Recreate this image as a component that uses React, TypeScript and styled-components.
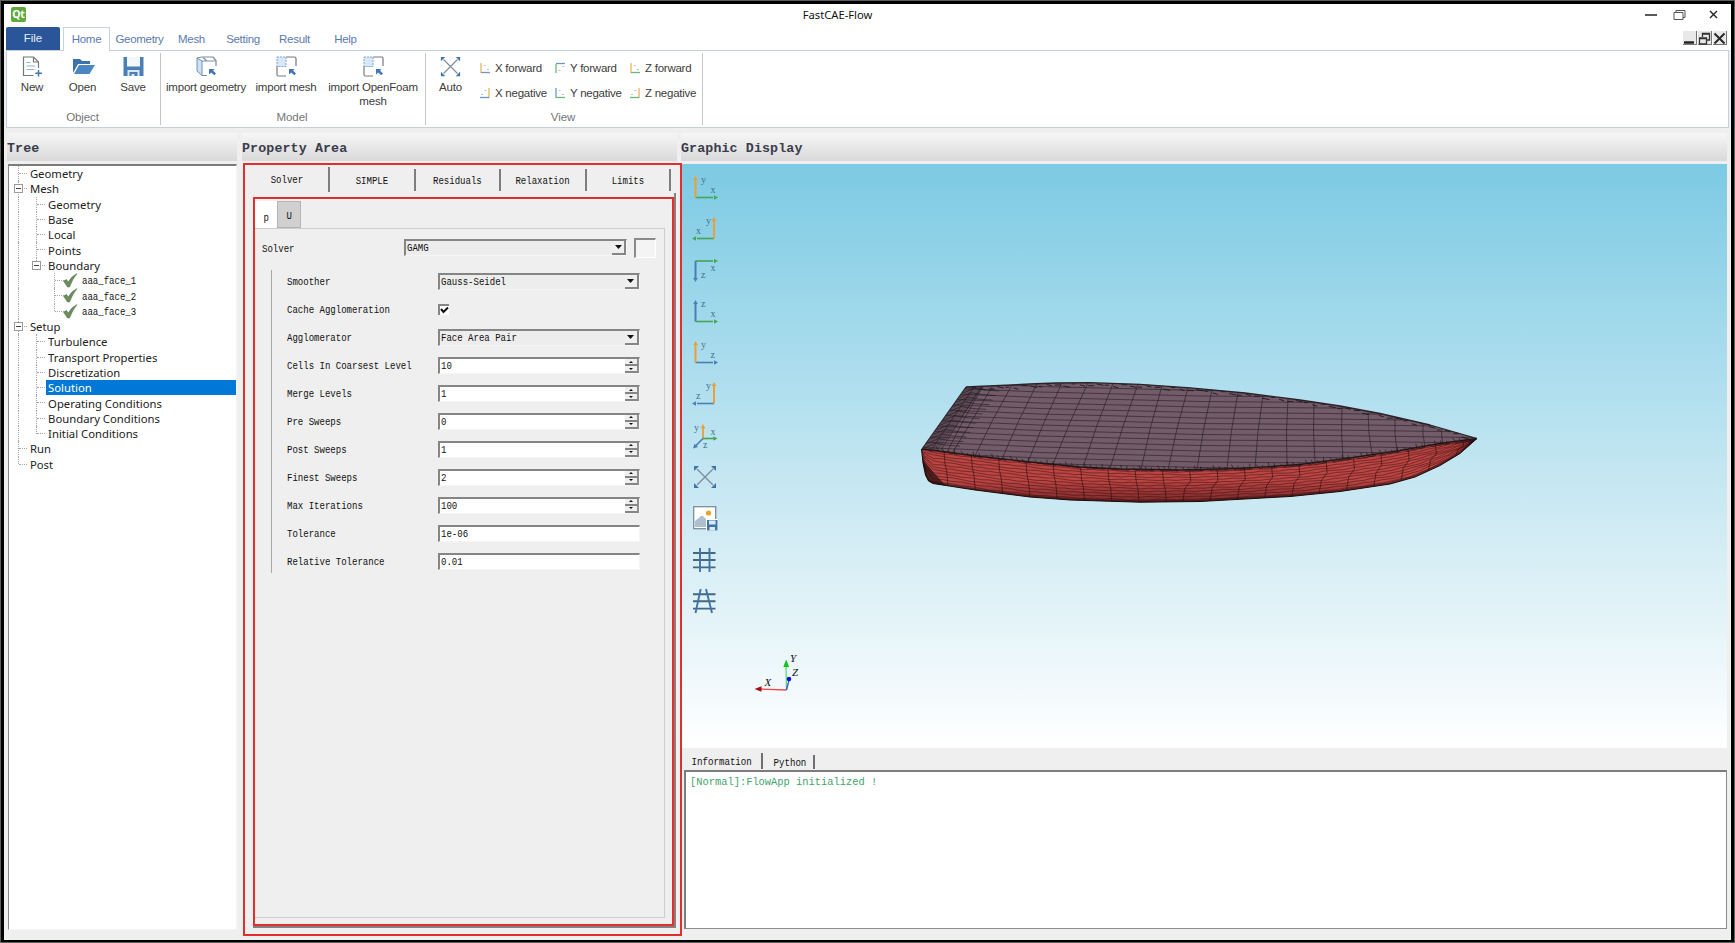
import React from "react";
import styled, { createGlobalStyle } from "styled-components";

const Global = createGlobalStyle`
  * { box-sizing: border-box; }
  body { margin: 0; background: #fff; }
`;

const SANS = `"Liberation Sans", Arial, sans-serif`;
const UI = `"Noto Sans", "Open Sans", sans-serif`;
const MONO = `"Liberation Mono", "Noto Sans CJK SC", monospace`;

/* ---------- window chrome ---------- */
const Frame = styled.div`
  width: 1735px;
  height: 943px;
  border: 4px solid #000;
  border-bottom-width: 3px;
  outline: 1px solid #5c605b;
  outline-offset: -1px;
  background: #efefef;
  display: flex;
  flex-direction: column;
  overflow: hidden;
  font-family: ${SANS};
  color: #222;
`;
const TitleBar = styled.div`
  height: 23px;
  flex: none;
  background: #fff;
  display: grid;
  grid-template-columns: 120px 1fr 120px;
  align-items: center;
  padding: 0 13px 2px 7px;
`;
const QtBadge = styled.div`
  width: 15px;
  height: 15px;
  border-radius: 2px;
  background: #5faa3c;
  color: #fff;
  font: bold 10.5px/14px ${UI};
  text-align: center;
  letter-spacing: -0.3px;
`;
const WindowTitle = styled.div`
  text-align: center;
  font: 11.2px/20px ${UI};
  color: #111;
  padding-right: 54px;
`;
const WindowButtons = styled.div`
  display: flex;
  justify-content: flex-end;
  align-items: center;
  gap: 16px;
`;
const MenuRow = styled.div`
  height: 23px;
  flex: none;
  background: #fff;
  display: flex;
  padding-left: 2px;
`;
const FileTab = styled.div`
  width: 54px;
  margin-right: 3px;
  background: #2a5699;
  border-radius: 2px 2px 0 0;
  color: #e6edf8;
  font-size: 11.5px;
  line-height: 23px;
  text-align: center;
`;
const MenuTab = styled.div<{ $w: number; $active?: boolean }>`
  width: ${(p) => p.$w}px;
  height: ${(p) => (p.$active ? 24 : 23)}px;
  position: relative;
  z-index: 1;
  border: 1px solid ${(p) => (p.$active ? "#c6d3e2" : "transparent")};
  border-bottom: none;
  background: ${(p) => (p.$active ? "#fff" : "transparent")};
  color: #5b7ab0;
  font-size: 11.5px;
  letter-spacing: -0.3px;
  line-height: 22px;
  text-align: center;
  white-space: nowrap;
`;
const MdiButtons = styled.div`
  display: flex;
  margin-left: auto;
  padding: 4px 4px 0 0;
  gap: 1px;
`;
const MdiButton = styled.div`
  width: 14px;
  height: 14px;
  background: #e9e9e9;
  border-right: 1px solid #777;
  border-bottom: 1px solid #777;
`;

/* ---------- ribbon ---------- */
const Ribbon = styled.div`
  height: 78px;
  flex: none;
  margin: 0 2px;
  background: #fff;
  border: 1px solid #c6d0db;
  display: flex;
`;
const RibbonGroup = styled.div<{ $w: number }>`
  width: ${(p) => p.$w}px;
  display: flex;
  flex-direction: column;
  position: relative;
  &::after {
    content: "";
    position: absolute;
    right: 0;
    top: 2px;
    height: 72px;
    border-right: 1px solid #c3c6ca;
  }
`;
const RibbonItems = styled.div`
  display: flex;
  height: 60px;
`;
const RibbonButton = styled.div<{ $w: number; $pad?: number }>`
  width: ${(p) => p.$w}px;
  margin-left: ${(p) => p.$pad ?? 0}px;
  display: flex;
  flex-direction: column;
  align-items: center;
  padding-top: 5px;
  font-size: 11.5px;
  letter-spacing: -0.2px;
  line-height: 13.5px;
  color: #3c3c3c;
  text-align: center;
  white-space: pre;
  svg { margin-bottom: 4px; flex: none; }
`;
const GroupLabel = styled.div`
  text-align: center;
  padding-right: 3px;
  font-size: 11.5px;
  letter-spacing: -0.1px;
  line-height: 13px;
  color: #757575;
`;
const ViewGrid = styled.div`
  display: grid;
  grid-template-columns: 75px 75px 74px;
  grid-template-rows: 24px 25px;
  padding: 5px 0 0 4px;
`;
const ViewButton = styled.div`
  display: flex;
  align-items: center;
  gap: 4px;
  font-size: 11.5px;
  letter-spacing: -0.25px;
  color: #3c3c3c;
  white-space: nowrap;
`;

/* ---------- panels ---------- */
const Body = styled.div`
  flex: 1;
  display: grid;
  grid-template-columns: 230px 444px 1046px;
  padding: 5px 0 0 3px;
`;
const Column = styled.div<{ $gap?: number }>`
  display: flex;
  flex-direction: column;
  min-width: 0;
  margin-left: ${(p) => p.$gap ?? 0}px;
`;
const PanelHeader = styled.div<{ $w: number }>`
  width: ${(p) => p.$w}px;
  height: 28px;
  flex: none;
  background: linear-gradient(#f6f6f6, #d9d9d9);
  font: bold 13.3px/31px ${MONO};
  letter-spacing: 0.12px;
  color: #3a3d4c;
  white-space: pre;
`;

const Song = styled.span<{ $size?: number; $sx?: number; $color?: string; $mid?: boolean }>`
  display: inline-block;
  font-family: ${MONO};
  font-size: ${(p) => p.$size ?? 10.5}px;
  color: ${(p) => p.$color ?? "#111"};
  transform: scaleX(${(p) => p.$sx ?? 0.86});
  transform-origin: ${(p) => (p.$mid ? "center" : "left")};
  white-space: pre;
`;

/* ---------- tree ---------- */
const TreeBox = styled.div`
  margin: 3px 0 0 1px;
  width: 229px;
  height: 766px;
  background: #fff;
  border: 1px solid #8a8a8a;
  border-top: 2px solid #7c7c7c;
  border-right: 1px solid #f4f4f4;
  border-bottom-color: #f4f4f4;
  padding-left: 1px;
`;
const TreeRow = styled.div`
  height: 15.3px;
  display: flex;
  font: 11.3px/15px ${UI};
  color: #222;
  white-space: nowrap;
`;
const Guide = styled.div<{ $v: "full" | "half" | "none"; $h?: boolean }>`
  width: 18.2px;
  position: relative;
  flex: none;
  &::before {
    content: "";
    position: absolute;
    left: 8px;
    top: 0;
    height: ${(p) => (p.$v === "full" ? "100%" : "50%")};
    border-left: ${(p) => (p.$v === "none" ? "none" : "1px dotted #a6a6a6")};
  }
  &::after {
    content: "";
    position: absolute;
    left: 9px;
    right: 1px;
    top: 7px;
    border-top: ${(p) => (p.$h ? "1px dotted #a6a6a6" : "none")};
  }
`;
const Toggle = styled.div`
  position: absolute;
  z-index: 1;
  left: 4px;
  top: 3px;
  width: 9px;
  height: 9px;
  border: 1px solid #9a9a9a;
  background: #fff;
  &::after {
    content: "";
    position: absolute;
    left: 1px;
    right: 1px;
    top: 3px;
    border-top: 1px solid #444;
  }
`;
const TreeText = styled.div<{ $sel?: boolean; $face?: boolean }>`
  padding-left: ${(p) => (p.$face ? 4 : 2.5)}px;
  padding-top: ${(p) => (p.$face ? 2 : 0)}px;
  margin-left: ${(p) => (p.$face ? 0 : -0.8)}px;
  position: relative;
  flex: 1;
  display: flex;
  align-items: center;
  ${(p) => (p.$sel ? "background:#0078d7;color:#fff;" : "")}
`;

/* ---------- property area ---------- */
const RedOuter = styled.div`
  position: relative;
  z-index: 2;
  margin: 2px -1px 0 1px;
  height: 773px;
  border: 2px solid #e02f2d;
  background: #efefef;
  display: flex;
  flex-direction: column;
`;
const TabStrip = styled.div`
  height: 28px;
  flex: none;
  display: flex;
  padding: 4px 0 0 0;
`;
const PropTab = styled.div<{ $w: number; $first?: boolean }>`
  width: ${(p) => p.$w}px;
  height: ${(p) => (p.$first ? 25 : 22)}px;
  margin-top: ${(p) => (p.$first ? -2 : 0)}px;
  border-right: 2px solid #7e7e7e;
  text-align: center;
  line-height: ${(p) => (p.$first ? 22 : 19)}px;
`;
const PageEdge = styled.div`
  margin: 0 4px 0 8px;
  height: 735px;
  padding-top: 4px;
  border-right: 2px solid #8a8080;
  border-bottom: 2px solid #8a8080;
`;
const RedInner = styled.div`
  height: 729px;
  border: 2px solid #e02f2d;
  display: flex;
  flex-direction: column;
  padding-top: 2px;
`;
const FieldTabs = styled.div`
  display: flex;
  height: 27px;
  flex: none;
`;
const FieldTab = styled.div<{ $on?: boolean }>`
  width: ${(p) => (p.$on ? 22 : 24)}px;
  background: ${(p) => (p.$on ? "#fff" : "#d0d0d0")};
  border: ${(p) => (p.$on ? "1px solid #fff" : "1px solid #b4b4b4")};
  text-align: center;
  line-height: ${(p) => (p.$on ? 27 : 24)}px;
`;
const GroupBox = styled.div`
  height: 690px;
  margin-right: 7px;
  border: 1px solid #cdcdcd;
  border-left: none;
  padding: 8px 0 0 7px;
`;
const SolverRow = styled.div`
  display: flex;
  align-items: center;
  height: 21px;
`;
const SolverLabel = styled.div`
  width: 142px;
  flex: none;
  line-height: 16px;
`;
const Swatch = styled.div`
  width: 22px;
  height: 20px;
  flex: none;
  margin-left: 7px;
  border: 1px solid #fff;
  border-top: 2px solid #8a8a8a;
  border-left: 2px solid #8a8a8a;
  background: #f4f4f4;
`;
const Details = styled.div`
  margin: 12px 0 0 9px;
  width: 369px;
  height: 303px;
  border-left: 1px solid #a8a8a8;
  display: flex;
  flex-direction: column;
`;
const FormRow = styled.div<{ $h: number }>`
  height: ${(p) => p.$h}px;
  display: flex;
  align-items: center;
  padding-left: 14.5px;
`;
const FormLabel = styled.div`
  width: 151px;
  line-height: 16px;
  padding-bottom: 1px;
`;
const Field = styled.div<{ $w: number; $white?: boolean }>`
  width: ${(p) => p.$w}px;
  flex: none;
  height: 17px;
  border: 1px solid #f6f6f6;
  border-top: 2px solid #858585;
  border-left: 2px solid #858585;
  background: ${(p) => (p.$white ? "#fff" : "#ededed")};
  display: flex;
  justify-content: space-between;
  line-height: 14px;
  padding-left: 1px;
`;
const DropButton = styled.div`
  width: 14px;
  height: 14px;
  border-right: 2px solid #858585;
  border-bottom: 2px solid #858585;
  background: #efefef;
  display: flex;
  align-items: center;
  justify-content: center;
`;
const Spin = styled.div`
  width: 14px;
  display: flex;
  flex-direction: column;
`;
const SpinHalf = styled.div`
  height: 7px;
  border-right: 2px solid #909090;
  border-bottom: 2px solid #858585;
  background: #efefef;
  display: flex;
  align-items: center;
  justify-content: center;
`;
const CheckBox = styled.div`
  width: 11px;
  height: 11px;
  background: #fff;
  border-top: 2px solid #858585;
  border-left: 2px solid #858585;
  display: flex;
`;

/* ---------- graphics ---------- */
const Scene = styled.div`
  margin-top: 3px;
  height: 584px;
  flex: none;
  background: linear-gradient(#7ccae3 0%, #a9dced 33%, #d0ebf4 62%, #ffffff 100%);
  position: relative;
`;
const SceneDrawing = styled.svg`
  position: absolute;
  left: 0;
  top: 0;
`;
const ToolColumn = styled.div`
  position: relative;
  width: 24px;
  margin-left: 12px;
  padding-top: 11.5px;
  display: flex;
  flex-direction: column;
  gap: 17.35px;
  svg { display: block; flex: none; overflow: visible; }
`;
const InfoTabs = styled.div`
  height: 22px;
  flex: none;
  display: flex;
  padding: 5px 0 0 2px;
`;
const InfoTab = styled.div<{ $w: number; $on?: boolean }>`
  width: ${(p) => p.$w}px;
  height: ${(p) => (p.$on ? 16 : 14)}px;
  margin-top: ${(p) => (p.$on ? 0 : 2)}px;
  padding-left: ${(p) => (p.$on ? 0 : 4)}px;
  border-right: 2px solid #707070;
  text-align: center;
  line-height: ${(p) => (p.$on ? 14 : 11)}px;
`;
const Console = styled.div`
  margin-left: 3px;
  width: 1043px;
  height: 159px;
  background: #fff;
  border: 1px solid #8c8c8c;
  border-top: 2px solid #7c7c7c;
  border-left: 2px solid #7c7c7c;
  padding: 1px 0 0 4px;
  line-height: 13px;
`;

/* ---------- icons ---------- */
const ORANGE = "#eb9f35";
const GREEN = "#45a655";
const BLUE = "#4a7fb5";

type AxesProps = {
  hc: string; vc: string; hl: string; vl: string;
  flipX?: boolean; flipY?: boolean;
};
const AxesIcon = ({ hc, vc, hl, vl, flipX, flipY }: AxesProps) => {
  const ox = flipX ? 21 : 2.5;
  const oy = flipY ? 3 : 21.5;
  const ex = flipX ? 0 : 24;
  const ey = flipY ? 24 : 0;
  const dx = flipX ? 4 : -4;
  const dy = flipY ? -4 : 4;
  return (
    <svg width="24" height="24" viewBox="0 0 24 24" fontFamily="Liberation Serif, serif" fontSize="10" fill="#46708c">
      <path d={`M${ox} ${oy}H${ex + dx}`} stroke={hc} strokeWidth="1.6" />
      <path d={`M${ox} ${oy}V${ey + dy}`} stroke={vc} strokeWidth="2" />
      <path d={`M${ex - dx / 4} ${oy}l${dx} -2.3v4.6z`} fill={hc} />
      <path d={`M${ox} ${ey}l-2.3 ${dy}h4.6z`} fill={vc} />
      <text x={flipX ? 3 : 17.5} y={flipY ? 12.500 : 17}>{hl}</text>
      <text x={flipX ? 13 : 8} y={flipY ? 20 : 7}>{vl}</text>
    </svg>
  );
};

const SmallAxes = ({ c1, c2, mode }: { c1: string; c2: string; mode: "bl" | "br" | "tl" }) => {
  const d = { bl: ["M2 1V11", "M2 10.5H11"], br: ["M10 1V11", "M10 10.5H1"], tl: ["M2 2V11", "M2 1.5H11"] }[mode];
  return (
    <svg width="12" height="12" viewBox="0 0 12 12" fill="none" strokeWidth="1.3" opacity="0.8">
      <path d={d[0]} stroke={c1} />
      <path d={d[1]} stroke={c2} />
      <path d={mode === "br" ? "M2 7.5h2M5.5 3.5h2" : mode === "tl" ? "M8.5 4.5h2M4.5 8.5h2" : "M5 3.5h1.5M8 7.5h2"} stroke="#9bb0c4" strokeWidth="1" />
    </svg>
  );
};

const NewIcon = () => (
  <svg width="20" height="21" viewBox="-0.5 0 20 21" fill="none" overflow="visible">
    <path d="M11 19.5H1V1H11L16 6V12" stroke="#777" strokeWidth="1.2" />
    <path d="M11 1V6H16" stroke="#777" strokeWidth="1.2" />
    <path d="M4 6.5H8M4 10H13M4 13.5H12" stroke="#8fb4dc" strokeWidth="1.2" />
    <path d="M16 14V20.5M12.8 17.2H19.4" stroke="#3f78b8" strokeWidth="1.5" />
  </svg>
);
const OpenIcon = () => (
  <svg width="23" height="21" viewBox="0 0 23 21" overflow="visible">
    <path d="M2 17V3H9L11 5H19V8H7L2 17Z" fill="#3f72a8" />
    <path d="M3 18L8 9H24L18.500 18Z" fill="#4b85c2" />
  </svg>
);
const SaveIcon = () => (
  <svg width="20" height="21" viewBox="-0.5 0 20 21" overflow="visible">
    <path d="M0 1H20V20H0Z" fill="#4a7fb8" />
    <path d="M3.5 1H16.5V10.500H3.5Z" fill="#f4f7fb" />
    <path d="M4 14H16V20H4Z" fill="#dce6f1" />
    <path d="M6 16H14V20H11V18H8V20H6Z" fill="#4a7fb8" />
  </svg>
);
const ImportGeometryIcon = () => (
  <svg width="21" height="21" viewBox="0 0 21 21" fill="none">
    <path d="M1 2L6 1H17L20 4.500V10M6 19.5H11" stroke="#7a8a9a" strokeWidth="1.2" />
    <path d="M1 2L6 5V19.5L1 15Z" fill="#cfe0f2" stroke="#6f93bb" />
    <path d="M6 5H19.500M7 1.500L11 5" stroke="#7a93ac" strokeWidth="1.1" />
    <path d="M13 13H18.5L17 14.6L20 17.6L18.2 19.2L15.2 16.4L13 18.5Z" fill="#3f78b8" />
  </svg>
);
const ImportMeshIcon = () => (
  <svg width="21" height="21" viewBox="0 0 21 21" fill="none">
    <path d="M10 1H18.5Q20 1 20 2.5V10M10 20H2.5Q1 20 1 18.5V10" stroke="#7a7a7a" strokeWidth="1.2" />
    <path d="M1 1H10V10.5H1Z" fill="#d9e8f7" stroke="#7fa6d0" strokeDasharray="2 1" />
    <path d="M13 13H18.5L17 14.6L20 17.6L18.2 19.2L15.2 16.4L13 18.5Z" fill="#3f78b8" />
  </svg>
);
const FitIcon = ({ s = 20 }: { s?: number }) => (
  <svg width={s} height={s} viewBox="0 0 24 24">
    <path d="M4 4L20 20M20 4L4 20" stroke="#7d8b98" strokeWidth="1.3" />
    <path d="M1 1H6L1 6ZM23 1H18L23 6ZM1 23H6L1 18ZM23 23H18L23 18Z" fill="#3f74ab" />
  </svg>
);
const IsoIcon = () => (
  <svg width="24" height="24" viewBox="0 0 24 24" fontFamily="Liberation Serif, serif" fontSize="10" fill="#46708c">
    <path d="M10 14.5V3" stroke={ORANGE} strokeWidth="1.8" />
    <path d="M10 14.5H21" stroke={GREEN} strokeWidth="1.6" />
    <path d="M10 14.5L2.5 22" stroke={BLUE} strokeWidth="1.7" />
    <path d="M10 0L7.7 4.2H12.3Z" fill={ORANGE} />
    <path d="M24.5 14.5L20.5 12.2V16.8Z" fill={GREEN} />
    <path d="M0 24.5L1.5 19.7L5 23Z" fill={BLUE} />
    <text x="1" y="6.500">y</text>
    <text x="17.5" y="11">x</text>
    <text x="10" y="24">z</text>
  </svg>
);
const SnapshotIcon = () => (
  <svg width="24" height="24" viewBox="0 0 24 24">
    <rect x="0.7" y="0.7" width="22" height="22" fill="#fff" stroke="#7e8d99" strokeWidth="1.3" />
    <path d="M2 21V15L8 10H10L15 15V21Z" fill="#adc0cf" />
    <circle cx="15.5" cy="7" r="2.6" fill="#e9a32d" />
    <path d="M13 13H25V25H13Z" fill="#fff" />
    <path d="M14 14H24.500V24.500H14Z" fill="#3f74ab" />
    <path d="M16 14.6H22.500V18.500H16ZM16.500 21H22V24.500H16.500Z" fill="#dceaf5" />
  </svg>
);
const GridIcon = ({ persp }: { persp?: boolean }) => (
  <svg width="24" height="24" viewBox="0 0 24 24" fill="none">
    <path d={persp ? "M0 5.3H22.5M0 12.3H22.5M0 19.6H22.5" : "M0 5H22.5M0 12H22.5M0 19.4H22.5"} stroke="#46677f" strokeWidth="1.9" />
    <path d={persp ? "M7.7 0L2.5 24M13 0L19 24" : "M7 0V24M16.5 0V24"} stroke="#3f74ab" strokeWidth="1.9" />
  </svg>
);
const CheckSvg = styled.svg`
  flex: none;
  margin-left: -1.5px;
`;
const CheckIcon = () => (
  <CheckSvg width="15" height="15" viewBox="0 0 15 15">
    <path d="M0.5 8L3.500 6.500L5.300 9Q8 3.500 14 0.5Q9.500 6 6.500 14H4.500Z" fill="#6b8d60" stroke="#4c6b45" strokeWidth="0.5" />
  </CheckSvg>
);

/* ---------- hull mesh ---------- */
type Pt = [number, number];
const at = (pts: Pt[], x: number): number => {
  for (let i = 1; i < pts.length; i++) {
    if (x <= pts[i][0]) {
      const [x0, y0] = pts[i - 1];
      const [x1, y1] = pts[i];
      return y0 + ((y1 - y0) * (x - x0)) / (x1 - x0);
    }
  }
  return pts[pts.length - 1][1];
};
const path = (pts: Pt[]) => pts.map(([x, y], i) => `${i ? "L" : "M"}${x.toFixed(1)} ${y.toFixed(1)}`).join("");

const deckTop: Pt[] = [[966, 387], [1000, 385.5], [1030, 384], [1056, 383], [1090, 382.7], [1140, 384.3], [1190, 387.8], [1245, 393], [1300, 400], [1340, 406], [1380, 413.5], [1430, 425], [1477, 438.5]];
const deckLow: Pt[] = [[922, 449], [950, 452.5], [980, 456.5], [1030, 462], [1080, 467], [1120, 469], [1180, 470], [1240, 468.5], [1300, 464.5], [1350, 458], [1400, 450.5], [1440, 443.5], [1477, 438.5]];
const keel: Pt[] = [[921.5, 449], [923, 463], [925.5, 475], [928.5, 481], [933, 483.5], [975, 490], [1030, 497], [1070, 500], [1140, 502.2], [1200, 501.5], [1290, 496.5], [1340, 491.500], [1390, 484], [1415, 477], [1440, 465.5], [1460, 453.5], [1477, 438.5]];

const ribs: Pt[] = [[983, 947], [1012, 975], [1037, 1002], [1062, 1028], [1088, 1053], [1113, 1083], [1138, 1110], [1162, 1141], [1188, 1168], [1212, 1197], [1238, 1227], [1263, 1255], [1288, 1287], [1314, 1315], [1342, 1343], [1368, 1372], [1395, 1397], [1423, 1425], [1442, 1443]];
const deckRibs = ribs.map(([a, b]) => path([[a, at(deckTop, a)], [(a + b) / 2 - 1, (at(deckTop, a) + at(deckLow, b)) / 2], [b, at(deckLow, b)]])).join("");

const strakes = Array.from({ length: 17 }, (_, i) => {
  const y = 381 + i * 5.5;
  return path([[922, y - 5], [1040, y], [1200, y + 4], [1330, y + 5], [1477, y + 7]]);
}).join("");
const rows: Pt[][] = Array.from({ length: 11 }, (_, i) => {
  const t = (i + 0.7) / 11.5;
  return Array.from({ length: 60 }, (_, j): Pt => {
    const x = 924 + j * 9.35;
    const a = at(deckLow, x);
    const b = at(keel, x);
    return [x, a + (b - a) * t + ((j * 7 + i * 3) % 5) * 0.25 - 0.5];
  });
});
const hullRows = rows.map(path).join("");
const hullRibs = Array.from({ length: 20 }, (_, i) => {
  const x = 944 + i * 27.3;
  const bend = i < 9 ? 4 : -7;
  const a = at(deckLow, x);
  const b = at(keel, x + bend);
  return path([[x, a], [x + 1, a + (b - a) * 0.35], [x + bend * 0.7, a + (b - a) * 0.6], [x + bend, b]]);
}).join("");
const transom = Array.from({ length: 13 }, (_, i) => {
  const y = 391 + i * 4.6;
  const x = 966 - (y - 387) * 0.71;
  return path([[x, y + 2], [x + 11, y - 3], [x + 22, y - 1], [x + 36, y]]);
}).join("");
const edgeCells = Array.from({ length: 88 }, (_, i) => {
  const x = 930 + i * 6.15;
  const y = at(deckLow, x);
  const h = 2 + ((i * 5) % 3);
  return `M${x.toFixed(1)} ${(y - h).toFixed(1)}l${(i * 3) % 4} ${h + 1}h${3 + (i % 4)}`;
}).join("");
const rimCells = Array.from({ length: 60 }, (_, i) => {
  const x = 972 + i * 8.3;
  const y = at(deckTop, x);
  return `M${x.toFixed(1)} ${(y + 1 + (i % 3)).toFixed(1)}l${4 + (i % 4)} ${(i % 2) * 1.5}`;
}).join("");

const deckOutline = path([...deckTop, ...[...deckLow].reverse()]) + "Z";
const hullOutline = path([...deckLow, ...[...keel].reverse()]) + "Z";

const Ship = () => (
  <g transform="translate(-681 -164)" fill="none" strokeLinejoin="round">
    <defs>
      <clipPath id="deck"><path d={deckOutline} /></clipPath>
      <clipPath id="hull"><path d={hullOutline} /></clipPath>
      <linearGradient id="hullFill" x1="0" y1="0" x2="0" y2="1">
        <stop offset="0" stopColor="#b84643" />
        <stop offset="0.65" stopColor="#bb4744" />
        <stop offset="1" stopColor="#7c2a2c" />
      </linearGradient>
    </defs>
    <path d={hullOutline} fill="url(#hullFill)" />
    <g clipPath="url(#hull)">
      <path d={hullRows} stroke="#36090b" strokeWidth="0.6" opacity="0.8" />
      <path d={hullRibs} stroke="#2a0a0b" strokeWidth="0.6" />
      <path d={path(keel)} stroke="#1a0808" strokeWidth="3.5" opacity="0.5" />
      <path d="M921 458L928 483L948 488L935 474Z" fill="#1d0c0d" opacity="0.65" />
    </g>
    <path d={deckOutline} fill="#735c69" />
    <g clipPath="url(#deck)">
      <path d={strakes} stroke="#2b2128" strokeWidth="0.65" />
      <path d={deckRibs} stroke="#2b2128" strokeWidth="0.7" />
      <path d="M966 387L922 449L938 451L984 386Z" fill="#2b2128" opacity="0.3" />
      <path d={transom} stroke="#1f171c" strokeWidth="0.6" />
      <path d="M974 387L932 449M981 387L941 450M992 387L953 452" stroke="#1f171c" strokeWidth="0.6" />
      <path d={rimCells} stroke="#1f171c" strokeWidth="0.9" />
    </g>
    <path d={edgeCells} stroke="#1f1518" strokeWidth="0.7" />
    <path d={path(deckLow)} stroke="#221619" strokeWidth="1.3" />
    <path d={path(deckTop)} stroke="#2a2228" strokeWidth="1.3" />
    <path d="M966 387L922 449" stroke="#2a2228" strokeWidth="1.2" />
    <path d={path(keel)} stroke="#1c0b0c" strokeWidth="1" />
  </g>
);

const Triad = () => (
  <g transform="translate(-681 -164)" fontFamily="Liberation Serif, serif" fontStyle="italic" fontSize="11" fill="#111" stroke="none">
    <path d="M786.500 690L761 689" stroke="#f04848" strokeWidth="1.3" />
    <path d="M786.500 690L786 667" stroke="#58dd70" strokeWidth="1.3" />
    <path d="M786.500 690L789 680" stroke="#4050e8" strokeWidth="1.3" />
    <path d="M754.500 689L761.500 686.300V691.700Z" fill="#a80d18" />
    <path d="M786.200 659.500L783.300 667H789.200Z" fill="#0fc51d" />
    <circle cx="789" cy="679" r="2.300" fill="#0b12d2" />
    <text x="764.500" y="686">X</text>
    <text x="790" y="662">Y</text>
    <text x="792" y="676">Z</text>
  </g>
);

/* ---------- data ---------- */
type G = "full" | "half" | "none";
type Node = { t: string; g: G[]; open?: boolean; check?: boolean; sel?: boolean };
const tree: Node[] = [
  { t: "Geometry", g: ["full"] },
  { t: "Mesh", g: ["full"], open: true },
  { t: "Geometry", g: ["full", "full"] },
  { t: "Base", g: ["full", "full"] },
  { t: "Local", g: ["full", "full"] },
  { t: "Points", g: ["full", "full"] },
  { t: "Boundary", g: ["full", "half"], open: true },
  { t: "aaa_face_1", g: ["full", "none", "full"], check: true },
  { t: "aaa_face_2", g: ["full", "none", "full"], check: true },
  { t: "aaa_face_3", g: ["full", "none", "half"], check: true },
  { t: "Setup", g: ["full"], open: true },
  { t: "Turbulence", g: ["full", "full"] },
  { t: "Transport Properties", g: ["full", "full"] },
  { t: "Discretization", g: ["full", "full"] },
  { t: "Solution", g: ["full", "full"], sel: true },
  { t: "Operating Conditions", g: ["full", "full"] },
  { t: "Boundary Conditions", g: ["full", "full"] },
  { t: "Initial Conditions", g: ["full", "half"] },
  { t: "Run", g: ["full"] },
  { t: "Post", g: ["half"] },
];

const menus: [string, number][] = [["Home", 47], ["Geometry", 59], ["Mesh", 45], ["Setting", 58], ["Result", 45], ["Help", 57]];
const propTabs: [string, number][] = [["Solver", 85], ["SIMPLE", 86], ["Residuals", 85], ["Relaxation", 86], ["Limits", 84]];

type Kind = "combo" | "check" | "spin" | "text";
const fields: { l: string; v: string; k: Kind; h: number }[] = [
  { l: "Smoother", v: "Gauss-Seidel", k: "combo", h: 24 },
  { l: "Cache Agglomeration", v: "", k: "check", h: 32 },
  { l: "Agglomerator", v: "Face Area Pair", k: "combo", h: 24 },
  { l: "Cells In Coarsest Level", v: "10", k: "spin", h: 32 },
  { l: "Merge Levels", v: "1", k: "spin", h: 24 },
  { l: "Pre Sweeps", v: "0", k: "spin", h: 32 },
  { l: "Post Sweeps", v: "1", k: "spin", h: 24 },
  { l: "Finest Sweeps", v: "2", k: "spin", h: 32 },
  { l: "Max Iterations", v: "100", k: "spin", h: 24 },
  { l: "Tolerance", v: "1e-06", k: "text", h: 32 },
  { l: "Relative Tolerance", v: "0.01", k: "text", h: 24 },
];

const DropArrow = () => (
  <DropButton>
    <svg width="7" height="4" viewBox="0 0 7 4"><path d="M0 0H7L3.500 4Z" fill="#111" /></svg>
  </DropButton>
);
const SpinButtons = () => (
  <Spin>
    <SpinHalf><svg width="4" height="2" viewBox="0 0 4 2"><path d="M0 2H4L2 0Z" fill="#111" /></svg></SpinHalf>
    <SpinHalf><svg width="4" height="2" viewBox="0 0 4 2"><path d="M0 0H4L2 2Z" fill="#111" /></svg></SpinHalf>
  </Spin>
);

export default function App() {
  return (
    <>
      <Global />
      <Frame>
        <TitleBar>
          <QtBadge>Qt</QtBadge>
          <WindowTitle>FastCAE-Flow</WindowTitle>
          <WindowButtons>
            <svg width="13" height="12" viewBox="-1 0 13 12"><path d="M0 6H12.500" stroke="#222" strokeWidth="1.500" /></svg>
            <svg width="13" height="12" viewBox="0 0 13 12" fill="none" stroke="#555"><path d="M1 3.500H10V10.500H1ZM3 3.500V1.500H12V8.500H10" /></svg>
            <svg width="16" height="9" viewBox="-7 0 16 9"><path d="M1 1L8 8M8 1L1 8" stroke="#222" strokeWidth="1.400" /></svg>
          </WindowButtons>
        </TitleBar>
        <MenuRow>
          <FileTab>File</FileTab>
          {menus.map(([t, w], i) => (
            <MenuTab key={t} $w={w} $active={i === 0}>{t}</MenuTab>
          ))}
          <MdiButtons>
            <MdiButton><svg width="13" height="13" viewBox="0 0 13 13"><path d="M1 10.500H11" stroke="#222" strokeWidth="2.500" /></svg></MdiButton>
            <MdiButton><svg width="13" height="13" viewBox="0 0 13 13" fill="none" stroke="#333" strokeWidth="1.300"><path d="M1.500 6H8.500V12H1.500ZM1 6.500H9M4.500 5V1.500H11.500V8H9M4 2H12" /></svg></MdiButton>
            <MdiButton><svg width="13" height="13" viewBox="0 0 13 13"><path d="M1.500 1.500L11.500 11.500M11.500 1.500L1.500 11.500" stroke="#2a2a2a" strokeWidth="2" /></svg></MdiButton>
          </MdiButtons>
        </MenuRow>
        <Ribbon>
          <RibbonGroup $w={154}>
            <RibbonItems>
              <RibbonButton $w={50}><NewIcon />New</RibbonButton>
              <RibbonButton $w={51}><OpenIcon />Open</RibbonButton>
              <RibbonButton $w={50}><SaveIcon />Save</RibbonButton>
            </RibbonItems>
            <GroupLabel>Object</GroupLabel>
          </RibbonGroup>
          <RibbonGroup $w={265}>
            <RibbonItems>
              <RibbonButton $w={80} $pad={5}><ImportGeometryIcon />import geometry</RibbonButton>
              <RibbonButton $w={80}><ImportMeshIcon />import mesh</RibbonButton>
              <RibbonButton $w={94}><ImportMeshIcon />{"import OpenFoam\nmesh"}</RibbonButton>
            </RibbonItems>
            <GroupLabel>Model</GroupLabel>
          </RibbonGroup>
          <RibbonGroup $w={277}>
            <RibbonItems>
              <RibbonButton $w={50}><FitIcon s={21} />Auto</RibbonButton>
              <ViewGrid>
                <ViewButton><SmallAxes c1={ORANGE} c2={BLUE} mode="bl" />X forward</ViewButton>
                <ViewButton><SmallAxes c1={GREEN} c2={BLUE} mode="tl" />Y forward</ViewButton>
                <ViewButton><SmallAxes c1={ORANGE} c2={GREEN} mode="bl" />Z forward</ViewButton>
                <ViewButton><SmallAxes c1={ORANGE} c2={BLUE} mode="br" />X negative</ViewButton>
                <ViewButton><SmallAxes c1={BLUE} c2={GREEN} mode="bl" />Y negative</ViewButton>
                <ViewButton><SmallAxes c1={ORANGE} c2={GREEN} mode="br" />Z negative</ViewButton>
              </ViewGrid>
            </RibbonItems>
            <GroupLabel>View</GroupLabel>
          </RibbonGroup>
        </Ribbon>

        <Body>
          <Column>
            <PanelHeader $w={230}>Tree</PanelHeader>
            <TreeBox>
              {tree.map((n, i) => (
                <TreeRow key={i}>
                  {n.g.map((g, j) => (
                    <Guide key={j} $v={g} $h={j === n.g.length - 1}>
                      {n.open && j === n.g.length - 1 && <Toggle />}
                    </Guide>
                  ))}
                  {n.check ? (
                    <>
                      <CheckIcon />
                      <TreeText $face><Song>{n.t}</Song></TreeText>
                    </>
                  ) : (
                    <TreeText $sel={n.sel}>{n.t}</TreeText>
                  )}
                </TreeRow>
              ))}
            </TreeBox>
          </Column>

          <Column $gap={5}>
            <PanelHeader $w={435}>Property Area</PanelHeader>
            <RedOuter>
              <TabStrip>
                {propTabs.map(([t, w], i) => (
                  <PropTab key={t} $w={w} $first={i === 0}><Song $mid>{t}</Song></PropTab>
                ))}
              </TabStrip>
              <PageEdge>
                <RedInner>
                  <FieldTabs>
                    <FieldTab $on><Song $mid>p</Song></FieldTab>
                    <FieldTab><Song $mid>U</Song></FieldTab>
                  </FieldTabs>
                  <GroupBox>
                    <SolverRow>
                      <SolverLabel><Song>Solver</Song></SolverLabel>
                      <Field $w={223}><Song>GAMG</Song><DropArrow /></Field>
                      <Swatch />
                    </SolverRow>
                    <Details>
                      {fields.map((f) => (
                        <FormRow key={f.l} $h={f.h}>
                          <FormLabel><Song>{f.l}</Song></FormLabel>
                          {f.k === "check" ? (
                            <CheckBox>
                              <svg width="9" height="9" viewBox="0 0 9 9"><path d="M1 3L3.500 6L8 1.500" fill="none" stroke="#111" strokeWidth="2" /></svg>
                            </CheckBox>
                          ) : (
                            <Field $w={202} $white={f.k !== "combo"}>
                              <Song>{f.v}</Song>
                              {f.k === "combo" && <DropArrow />}
                              {f.k === "spin" && <SpinButtons />}
                            </Field>
                          )}
                        </FormRow>
                      ))}
                    </Details>
                  </GroupBox>
                </RedInner>
              </PageEdge>
            </RedOuter>
          </Column>

          <Column>
            <PanelHeader $w={1046}>Graphic Display</PanelHeader>
            <Scene>
              <SceneDrawing width="1046" height="584">
                <Ship />
                <Triad />
              </SceneDrawing>
              <ToolColumn>
                <AxesIcon hc={GREEN} vc={ORANGE} hl="x" vl="y" />
                <AxesIcon hc={GREEN} vc={ORANGE} hl="x" vl="y" flipX />
                <AxesIcon hc={GREEN} vc={BLUE} hl="x" vl="z" flipY />
                <AxesIcon hc={GREEN} vc={BLUE} hl="x" vl="z" />
                <AxesIcon hc={BLUE} vc={ORANGE} hl="z" vl="y" />
                <AxesIcon hc={BLUE} vc={ORANGE} hl="z" vl="y" flipX />
                <IsoIcon />
                <FitIcon s={24} />
                <SnapshotIcon />
                <GridIcon />
                <GridIcon persp />
              </ToolColumn>
            </Scene>
            <InfoTabs>
              <InfoTab $w={80} $on><Song $mid $sx={0.87}>Information</Song></InfoTab>
              <InfoTab $w={52}><Song $mid $sx={0.87}>Python</Song></InfoTab>
            </InfoTabs>
            <Console><Song $size={11} $sx={0.945} $color="#3fa56c">[Normal]:FlowApp initialized !</Song></Console>
          </Column>
        </Body>
      </Frame>
    </>
  );
}
